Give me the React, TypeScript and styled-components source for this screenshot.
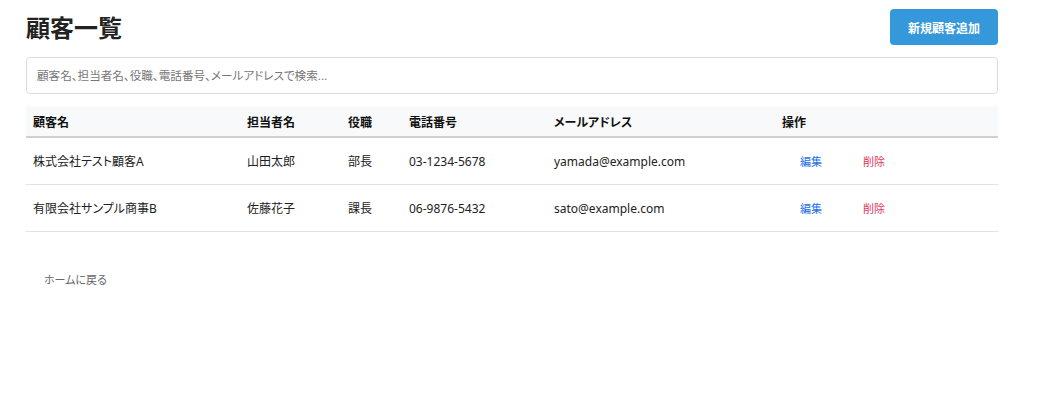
import React from "react";
import styled, { createGlobalStyle } from "styled-components";

const GlobalStyle = createGlobalStyle`
  html, body { margin: 0; padding: 0; background: #fff; }
  body {
    font-family: "Noto Sans", "Noto Sans CJK JP", sans-serif;
    color: #222;
  }
`;

const Page = styled.div`
  width: 972px;
  margin-left: 26px;
  padding-top: 9px;
`;

const Header = styled.div`
  display: flex;
  align-items: center;
  justify-content: space-between;
  height: 36px;
`;

const Title = styled.h1`
  margin: 0;
  font-size: 24px;
  font-weight: 700;
  font-family: "Noto Sans CJK JP", sans-serif;
  color: #222;
  line-height: 32px;
`;

const PrimaryButton = styled.button`
  height: 36px;
  padding: 0 18px;
  border: none;
  border-radius: 4px;
  background: #3498db;
  color: #fff;
  font-family: "Noto Sans CJK JP", sans-serif;
  font-size: 12px;
  font-weight: 700;
  cursor: pointer;
`;

const SearchInput = styled.input`
  display: block;
  box-sizing: border-box;
  width: 100%;
  height: 37px;
  margin-top: 12px;
  padding: 0 10px;
  border: 1px solid #dcdcdc;
  border-radius: 4px;
  font-family: "Noto Sans", "Noto Sans CJK JP", sans-serif;
  font-feature-settings: "palt";
  font-size: 11.6px;
  &::placeholder { color: #777; }
`;

const Table = styled.table`
  width: 100%;
  margin-top: 12px;
  border-collapse: collapse;
  table-layout: fixed;
  font-size: 12px;
  font-feature-settings: "palt";
`;

const Th = styled.th<{ $w: number }>`
  box-sizing: border-box;
  width: ${(p) => p.$w}px;
  height: 31px;
  padding: 0 7px;
  text-align: left;
  font-weight: 700;
  font-family: "Noto Sans CJK JP", sans-serif;
  color: #111;
  background: #f8f9fa;
  border-bottom: 2px solid #cfcfd2;
`;

const Td = styled.td`
  height: 46px;
  padding: 0 7px;
  color: #222;
  border-bottom: 1px solid #dee2e6;
  white-space: nowrap;
`;

const Actions = styled.div`
  display: flex;
  gap: 5px;
`;

const TextButton = styled.button<{ $tone: "edit" | "delete" | "muted" }>`
  background: transparent;
  border: none;
  padding: 4px 18px;
  font-family: "Noto Sans CJK JP", sans-serif;
  font-feature-settings: "palt";
  font-size: 11px;
  cursor: pointer;
  color: ${(p) =>
    p.$tone === "edit" ? "#1e6fe6" : p.$tone === "delete" ? "#e0365a" : "#666"};
`;

const BackButton = styled(TextButton)`
  margin-top: 33px;
  font-size: 11px;
  padding: 6px 18px;
`;

const columns = [
  { label: "顧客名", w: 214 },
  { label: "担当者名", w: 101 },
  { label: "役職", w: 61 },
  { label: "電話番号", w: 145 },
  { label: "メールアドレス", w: 228 },
  { label: "操作", w: 223 },
];

const customers = [
  { name: "株式会社テスト顧客A", contact: "山田太郎", title: "部長", phone: "03-1234-5678", email: "yamada@example.com" },
  { name: "有限会社サンプル商事B", contact: "佐藤花子", title: "課長", phone: "06-9876-5432", email: "sato@example.com" },
];

export default function App() {
  return (
    <>
      <GlobalStyle />
      <Page>
        <Header>
          <Title>顧客一覧</Title>
          <PrimaryButton>新規顧客追加</PrimaryButton>
        </Header>
        <SearchInput placeholder="顧客名、担当者名、役職、電話番号、メールアドレスで検索..." />
        <Table>
          <thead>
            <tr>
              {columns.map((c) => (
                <Th key={c.label} $w={c.w}>{c.label}</Th>
              ))}
            </tr>
          </thead>
          <tbody>
            {customers.map((c) => (
              <tr key={c.email}>
                <Td>{c.name}</Td>
                <Td>{c.contact}</Td>
                <Td>{c.title}</Td>
                <Td>{c.phone}</Td>
                <Td>{c.email}</Td>
                <Td>
                  <Actions>
                    <TextButton $tone="edit">編集</TextButton>
                    <TextButton $tone="delete">削除</TextButton>
                  </Actions>
                </Td>
              </tr>
            ))}
          </tbody>
        </Table>
        <BackButton $tone="muted">ホームに戻る</BackButton>
      </Page>
    </>
  );
}
